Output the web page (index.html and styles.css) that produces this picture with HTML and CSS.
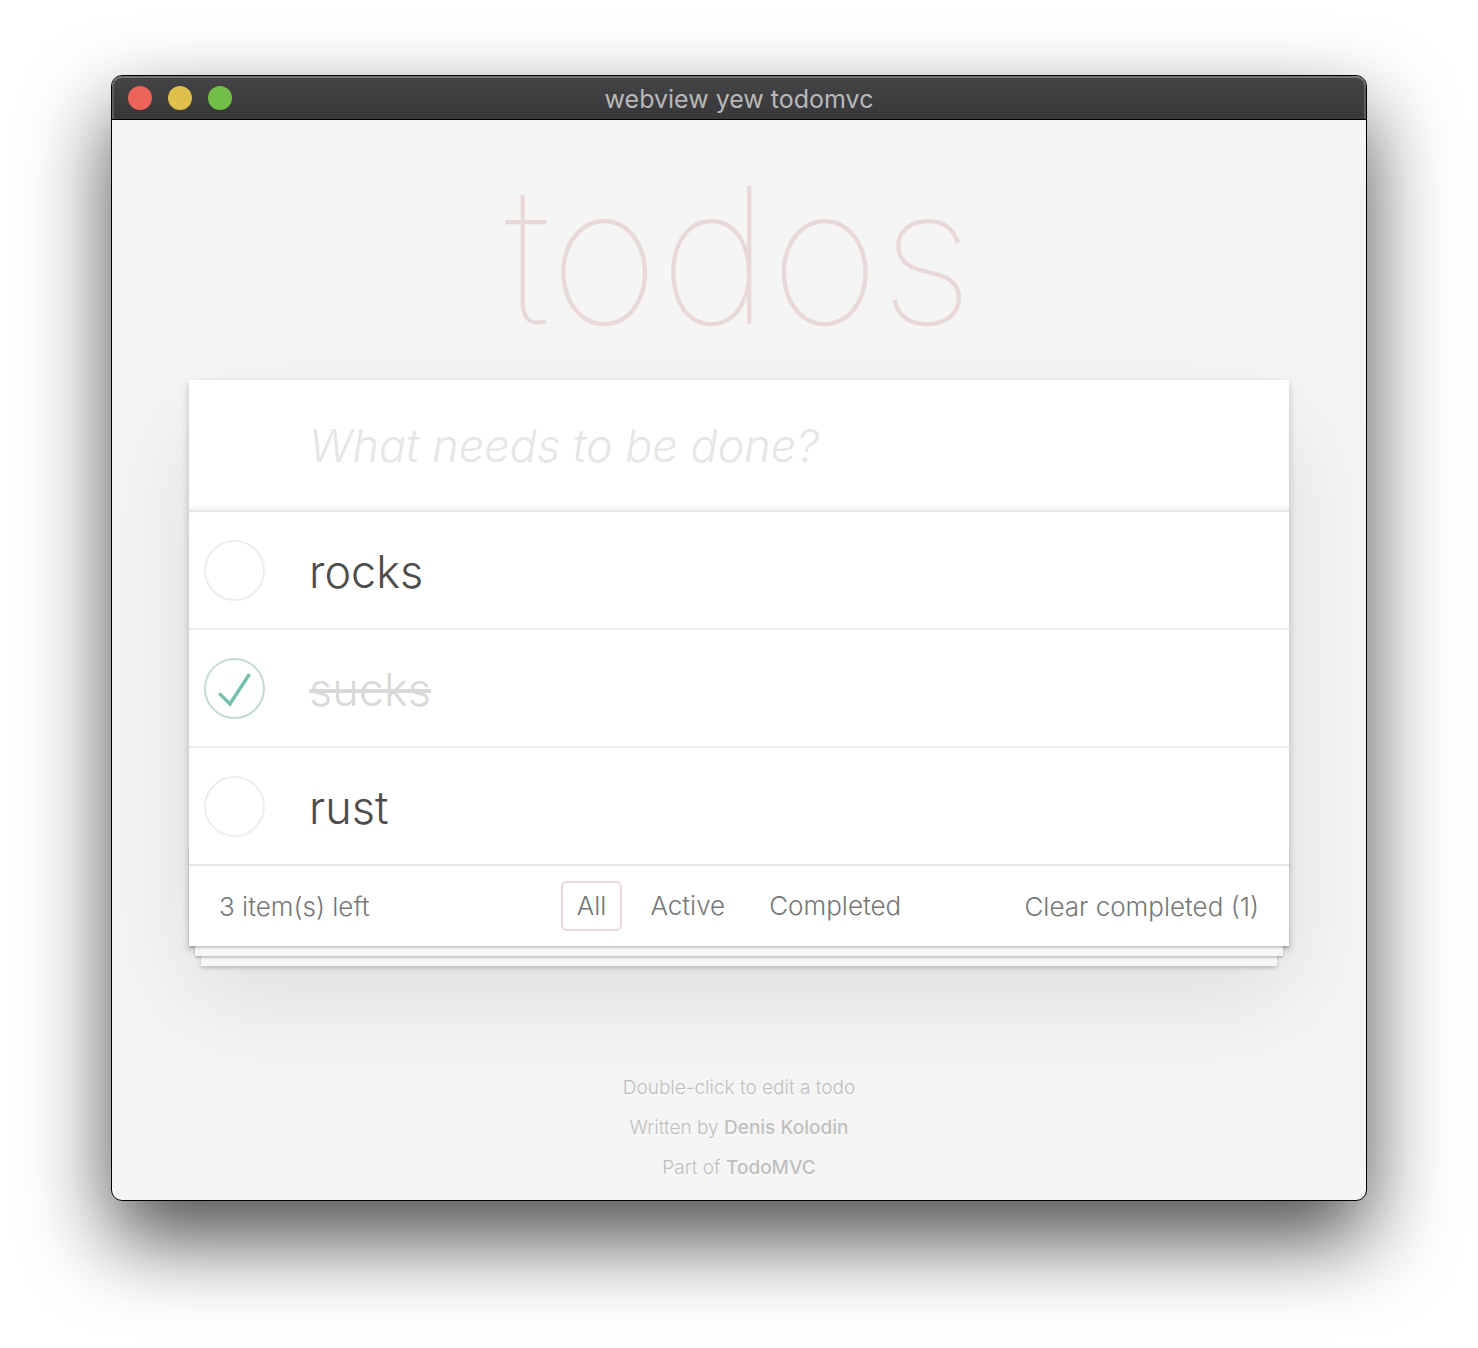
FILE: index.html
```html
<!DOCTYPE html>
<html lang="en">
<head>
<meta charset="utf-8">
<meta name="viewport" content="width=device-width, initial-scale=1">
<title>webview yew todomvc</title>
<link rel="stylesheet" href="styles.css">
</head>
<body>
<div class="window">
  <header class="titlebar">
    <div class="controls">
      <button class="control close" type="button" aria-label="Close"></button>
      <button class="control minimize" type="button" aria-label="Minimize"></button>
      <button class="control zoom" type="button" aria-label="Zoom"></button>
    </div>
    <span class="window-title">webview yew todomvc</span>
  </header>
  <main class="content">
    <h1 class="heading">todos</h1>
    <section class="todoapp">
      <input class="new-todo" type="text" placeholder="What needs to be done?" aria-label="New todo">
      <ul class="todo-list">
        <li class="todo">
          <span class="toggle">
            <input class="toggle-box" type="checkbox" id="todo-1">
          </span>
          <label class="todo-label" for="todo-1">rocks</label>
        </li>
        <li class="todo completed">
          <span class="toggle">
            <input class="toggle-box" type="checkbox" id="todo-2" checked>
            <svg class="tick" viewBox="0 0 100 100" aria-hidden="true"><path d="M72 25L42 71 27 56l-4 4 20 20 34-52z"/></svg>
          </span>
          <label class="todo-label" for="todo-2">sucks</label>
        </li>
        <li class="todo">
          <span class="toggle">
            <input class="toggle-box" type="checkbox" id="todo-3">
          </span>
          <label class="todo-label" for="todo-3">rust</label>
        </li>
      </ul>
      <footer class="footer">
        <span class="todo-count">3 item(s) left</span>
        <nav class="filters">
          <a class="filter selected" href="#/">All</a>
          <a class="filter" href="#/active">Active</a>
          <a class="filter" href="#/completed">Completed</a>
        </nav>
        <button class="clear-completed" type="button">Clear completed (1)</button>
      </footer>
    </section>
    <footer class="info">
      <p>Double-click to edit a todo</p>
      <p>Written by <a href="https://github.com/DenisKolodin/">Denis Kolodin</a></p>
      <p>Part of <a href="http://todomvc.com/">TodoMVC</a></p>
    </footer>
  </main>
</div>
</body>
</html>
```
FILE: styles.css
```css
* {
  box-sizing: border-box;
}

body {
  margin: 0;
  padding: 75px 111px 147px;
  background: #fff;
  color: #4d4d4d;
  font-family: Inter, "Liberation Sans", sans-serif;
  font-size: 26px;
  font-weight: 300;
}

button,
input {
  margin: 0;
  padding: 0;
  border: 0;
  background: none;
  color: inherit;
  font: inherit;
}

a {
  color: inherit;
  text-decoration: none;
}

.window {
  border: 1px solid #000;
  border-radius: 11px;
  background: #f5f5f5;
  box-shadow: 0 38px 84px rgba(0, 0, 0, 0.7);
  overflow: hidden;
}

/* Title bar */
.titlebar {
  display: grid;
  grid-template-columns: 1fr auto 1fr;
  align-items: center;
  height: 44px;
  padding: 0 16px;
  border-bottom: 1px solid #000;
  border-radius: 10px 10px 0 0;
  background: linear-gradient(#454547, #373739);
  box-shadow: inset 0 2px 0 #767678, inset 2px 0 0 #5e5e60, inset -2px 0 0 #5e5e60;
}

.controls {
  display: flex;
  gap: 16px;
}

.control {
  width: 24px;
  height: 24px;
  border-radius: 50%;
}

.close {
  background: #ed655a;
}

.minimize {
  background: #e0c04c;
}

.zoom {
  background: #72be47;
}

.window-title {
  padding-top: 2px;
  color: #b8b8b9;
  font-size: 25px;
  font-weight: 400;
}

/* Page */
.content {
  padding: 20px 77px 12px;
}

.heading {
  margin: 0;
  padding-bottom: 10px;
  color: #e8d9d8;
  font-size: 190px;
  font-weight: 100;
  line-height: 230px;
  text-align: center;
}

.todoapp {
  background: #fff;
  box-shadow: 0 4px 8px rgba(0, 0, 0, 0.2), 0 50px 100px rgba(0, 0, 0, 0.1);
}

.new-todo {
  display: block;
  width: 100%;
  height: 130px;
  padding: 0 32px 0 120px;
  box-shadow: inset 0 -4px 2px rgba(0, 0, 0, 0.03);
  font-size: 45px;
}

.new-todo::placeholder {
  color: #e6e6e6;
  font-style: italic;
  opacity: 1;
}

.todo-list {
  margin: 0;
  padding: 0;
  border-top: 2px solid #e6e6e6;
  list-style: none;
}

.todo {
  display: flex;
  align-items: center;
  gap: 44px;
  height: 118px;
  padding-left: 15px;
  border-bottom: 2px solid #ededed;
  font-size: 45px;
}

.todo:last-child {
  height: 116px;
  border-bottom: 0;
}

.toggle {
  display: grid;
}

.toggle-box,
.tick {
  grid-area: 1 / 1;
  width: 61px;
  height: 61px;
}

.toggle-box {
  appearance: none;
  border: 2px solid #ededed;
  border-radius: 50%;
}

.toggle-box:checked {
  border-color: #c2dad5;
}

.tick {
  fill: #74c0af;
  pointer-events: none;
}

.todo-label {
  padding-top: 2px;
}

.completed .todo-label {
  color: #d9d9d9;
  text-decoration: line-through;
}

/* List footer, with two sheets of paper showing below it */
.footer {
  position: relative;
  display: grid;
  grid-template-columns: 1fr auto 1fr;
  align-items: center;
  height: 82px;
  padding: 0 30px;
  border-top: 2px solid #e6e6e6;
  color: #777;
}

.footer::before {
  content: "";
  position: absolute;
  right: 0;
  bottom: 0;
  left: 0;
  height: 100px;
  box-shadow: 0 2px 2px rgba(0, 0, 0, 0.2), 0 16px 0 -6px #f6f6f6,
    0 18px 2px -6px rgba(0, 0, 0, 0.2), 0 32px 0 -12px #f6f6f6,
    0 34px 4px -12px rgba(0, 0, 0, 0.2);
  pointer-events: none;
}

.filters {
  display: flex;
  gap: 12px;
}

.filter {
  padding: 0 14px;
  border: 2px solid transparent;
  border-radius: 6px;
  line-height: 46px;
}

.filter.selected {
  border-color: #ead7d7;
}

.clear-completed {
  justify-self: end;
  cursor: pointer;
}

.info {
  padding-top: 122px;
  color: #bfbfbf;
  font-size: 19px;
  line-height: 40px;
  text-align: center;
  text-shadow: 0 2px 0 rgba(255, 255, 255, 0.5);
}

.info p {
  margin: 0;
}

.info a {
  font-weight: 500;
}
```
